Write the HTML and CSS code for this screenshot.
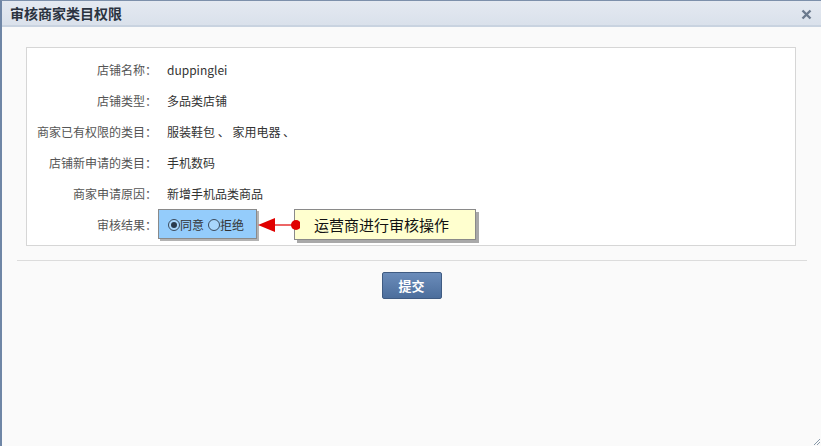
FILE: index.html
```html
<!DOCTYPE html>
<html>
<head>
<meta charset="utf-8">
<link rel="stylesheet" href="styles.css">
</head>
<body>
<div class="window">
  <div class="titlebar">
    <span class="title">审核商家类目权限</span>
    <span class="close">
      <svg width="11" height="11" viewBox="0 0 11 11"><path d="M1.5 1.5L9.5 9.5M9.5 1.5L1.5 9.5" stroke="#6b7a8d" stroke-width="2.4"/></svg>
    </span>
  </div>
  <div class="content">
    <div class="panel">
      <div class="row"><div class="label">店铺名称：</div><div class="value">duppinglei</div></div>
      <div class="row"><div class="label">店铺类型：</div><div class="value">多品类店铺</div></div>
      <div class="row"><div class="label">商家已有权限的类目：</div><div class="value">服装鞋包 、 家用电器 、</div></div>
      <div class="row"><div class="label">店铺新申请的类目：</div><div class="value">手机数码</div></div>
      <div class="row"><div class="label">商家申请原因：</div><div class="value">新增手机品类商品</div></div>
      <div class="row"><div class="label">审核结果：</div>
        <div class="value">
          <div class="radiobox">
            <span class="radio on"></span><span class="rtext">同意</span>
            <span class="radio"></span><span class="rtext">拒绝</span>
          </div>
          <div class="callout">运营商进行审核操作</div>
          <div class="arrow">
            <svg width="42" height="16" viewBox="0 0 42 16"><path d="M0 8L17 1L17 15Z" fill="#e00000"/><path d="M16 8H37" stroke="#e00000" stroke-width="1.2"/><circle cx="38" cy="8" r="5" fill="#e00000"/></svg>
          </div>
        </div>
      </div>
    </div>
    <div class="sep"></div>
    <div class="actions"><button class="btn">提交</button></div>
  </div>
  <svg class="grip" width="6" height="6" viewBox="0 0 6 6"><path d="M0 6L6 0M3 6L6 3" stroke="#8899aa" stroke-width="1"/></svg>
</div>
</body>
</html>
```
FILE: styles.css
```css
html, body { margin: 0; padding: 0; }
body {
  width: 821px; height: 446px; overflow: hidden;
  font-family: "Noto Sans CJK SC", "Microsoft YaHei", sans-serif;
  background: #fafafa;
}
.window {
  position: relative;
  box-sizing: border-box;
  width: 821px; height: 446px;
  border-top: 1px solid #7d90ab;
  border-left: 2px solid #6f86a6;
  background: #fafafa;
}
.titlebar {
  height: 26px;
  box-sizing: border-box;
  background: linear-gradient(#e4e9f1, #dae1eb);
  border-bottom: 2px solid #c9d3e0;
  display: flex; align-items: center; justify-content: space-between;
  padding: 0 9px 0 8px;
}
.title {
  font-size: 14px; font-weight: bold; color: #2b3340;
  line-height: 26px;
}
.close { display: flex; align-items: center; margin-top: 2px; }
.content { padding: 20px 0 0 0; }
.panel {
  margin: 0 25px 0 24px;
  border: 1px solid #d6d6d6;
  background: #fff;
  padding: 6px 0 5px 0;
}
.row { display: flex; height: 31px; align-items: center; font-size: 12px; }
.label { width: 130px; text-align: right; color: #555; }
.value { margin-left: 10px; color: #333; position: relative; flex: 1; height: 31px; display: flex; align-items: center; }
.radiobox {
  position: absolute; left: -9px; top: 0;
  width: 99px; height: 30px; box-sizing: border-box;
  background: #94ccfb;
  border: 1px solid #8a8a8a;
  box-shadow: 2px 2px 0 #b3b3b3;
  display: flex; align-items: center; padding-left: 9px;
  color: #333; font-size: 12px;
}
.radio {
  width: 12px; height: 12px; border: 1px solid #3a4a5c; border-radius: 50%;
  box-sizing: border-box; position: relative; margin-top: 1px; background: #a8d6fc;
}
.radio.on::after {
  content: ""; position: absolute; left: 2px; top: 2px; width: 6px; height: 6px; border-radius: 50%; background: #2a3a4c;
}
.rtext { margin-right: 4px; }
.arrow { position: absolute; left: 91px; top: 8px; line-height: 0; }
.callout {
  position: absolute; left: 127px; top: 0;
  width: 182px; height: 31px; box-sizing: border-box;
  background: #ffffcf;
  border: 1px solid #8a8a8a;
  box-shadow: 3px 3px 0 #a9a9a9;
  font-size: 15px; color: #111;
  display: flex; align-items: center; padding-left: 19px;
}
.sep { margin: 14px 14px 0 15px; border-top: 1px solid #dcdcdc; }
.actions { display: flex; justify-content: center; padding-top: 11px; }
.btn {
  width: 60px; height: 27px;
  border: 1px solid #3f5b82; border-radius: 2px;
  background: linear-gradient(#6b8cba, #4c6e9c);
  color: #fff; font-weight: bold; font-size: 13px;
  font-family: "Noto Sans CJK SC", sans-serif;
  padding: 0;
}
.grip { position: absolute; right: 1px; bottom: 1px; }
```
